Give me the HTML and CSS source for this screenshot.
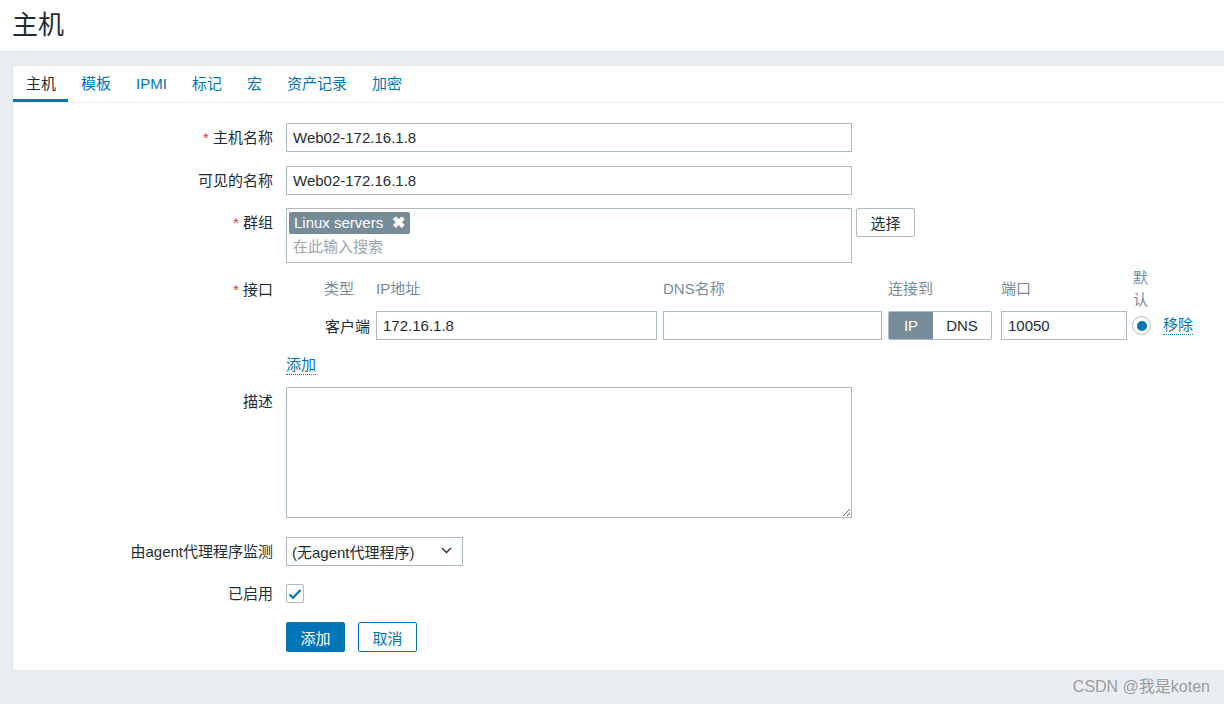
FILE: index.html
```html
<!DOCTYPE html>
<html lang="zh-CN">
<head>
<meta charset="utf-8">
<title>主机</title>
<link rel="stylesheet" href="styles.css">
</head>
<body>
<header class="page-header">
  <h1 class="page-title">主机</h1>
</header>
<main class="main">
  <section class="box">
    <ul class="tabs">
      <li class="tab active">主机</li>
      <li class="tab">模板</li>
      <li class="tab">IPMI</li>
      <li class="tab">标记</li>
      <li class="tab">宏</li>
      <li class="tab">资产记录</li>
      <li class="tab">加密</li>
    </ul>
    <form class="form">
      <div class="row r1">
        <label class="label"><span class="req">*</span> 主机名称</label>
        <input class="input wide" type="text" value="Web02-172.16.1.8">
      </div>
      <div class="row r2">
        <label class="label">可见的名称</label>
        <input class="input wide" type="text" value="Web02-172.16.1.8">
      </div>
      <div class="row r3">
        <label class="label"><span class="req">*</span> 群组</label>
        <div class="multiselect">
          <span class="tag">Linux servers <span class="tag-x">&#10006;</span></span>
          <span class="ms-placeholder">在此输入搜索</span>
        </div>
        <button type="button" class="btn-alt">选择</button>
      </div>
      <div class="row r4">
        <label class="label label-if"><span class="req">*</span> 接口</label>
        <div class="iface">
          <div class="ih"></div>
          <div class="ih">类型</div>
          <div class="ih">IP地址</div>
          <div class="ih">DNS名称</div>
          <div class="ih">连接到</div>
          <div class="ih">端口</div>
          <div class="ih ih-def">默认</div>
          <div class="ih"></div>

          <div></div>
          <div class="itype">客户端</div>
          <input class="input" type="text" value="172.16.1.8">
          <input class="input" type="text" value="">
          <div class="toggle"><span class="tg on">IP</span><span class="tg">DNS</span></div>
          <input class="input" type="text" value="10050">
          <div class="radio"><span class="dot"></span></div>
          <a class="link">移除</a>
        </div>
      </div>
      <div class="row r5">
        <span class="label"></span>
        <a class="link">添加</a>
      </div>
      <div class="row r6">
        <label class="label">描述</label>
        <textarea class="textarea"></textarea>
      </div>
      <div class="row r7">
        <label class="label">由agent代理程序监测</label>
        <div class="select">
          <span>(无agent代理程序)</span>
          <svg class="chev" width="11" height="7" viewBox="0 0 11 7"><path d="M1 1l4.5 4.5L10 1" fill="none" stroke="#1f2c33" stroke-width="1.3"/></svg>
        </div>
      </div>
      <div class="row r8">
        <label class="label lbl-cb">已启用</label>
        <span class="checkbox">
          <svg width="14" height="12" viewBox="0 0 14 12"><path d="M1.5 6.5l3.5 3.3L12.5 2" fill="none" stroke="#0275b8" stroke-width="2.2"/></svg>
        </span>
      </div>
      <div class="row r9">
        <span class="label"></span>
        <button type="button" class="btn-main">添加</button>
        <button type="button" class="btn-cancel">取消</button>
      </div>
    </form>
  </section>
</main>
<footer class="footer">CSDN @我是koten</footer>
</body>
</html>
```

FILE: styles.css
```css
* { box-sizing: border-box; }
html, body { margin: 0; padding: 0; }
body {
  background: #ebeef0;
  font-family: "Liberation Sans", Arial, "Noto Sans CJK SC", sans-serif;
  font-size: 15px;
  color: #1f2c33;
  width: 1224px;
  height: 704px;
  overflow: hidden;
}
.page-header {
  background: #fff;
  height: 52px;
  border-bottom: 1px solid #dfe4e7;
  padding-left: 12px;
}
.page-title {
  margin: 0;
  font-size: 26px;
  font-weight: normal;
  line-height: 50px;
  color: #1f2c33;
}
.main {
  padding: 13px 0 0 12px;
}
.box {
  background: #fff;
  border: 1px solid #dfe4e7;
  border-right: none;
  height: 606px;
}
.tabs {
  list-style: none;
  margin: 0;
  padding: 0;
  display: flex;
  height: 37px;
  border-bottom: 1px solid #ebeef0;
}
.tab {
  padding: 0 12px 0 13px;
  line-height: 36px;
  color: #0275b8;
  border-bottom: 3px solid transparent;
}
.tab.active {
  color: #1f2c33;
  border-bottom-color: #0275b8;
}
.form {
  padding-top: 20px;
}
.row {
  display: flex;
  align-items: flex-start;
}
.label {
  flex: 0 0 260px;
  width: 260px;
  margin-right: 13px;
  text-align: right;
  line-height: 29px;
  color: #1f2c33;
}
.req { color: #e33734; }
.input {
  height: 29px;
  border: 1px solid #acbbc2;
  padding: 0 6px;
  font: inherit;
  color: #1f2c33;
  background: #fff;
  outline: none;
  width: 100%;
}
.input.wide { width: 566px; }
.r1 { margin-bottom: 14px; }
.r2 { margin-bottom: 13px; }
.r3 { margin-bottom: 6px; }
.multiselect {
  width: 566px;
  height: 55px;
  border: 1px solid #acbbc2;
  padding: 3px 2px;
  display: flex;
  flex-direction: column;
  align-items: flex-start;
}
.tag {
  background: #768d99;
  color: #fff;
  border-radius: 2px;
  height: 22px;
  line-height: 22px;
  padding: 0 5px 0 5px;
  white-space: nowrap;
}
.tag-x { margin-left: 5px; font-size: 16px; font-weight: bold; }
.ms-placeholder {
  color: #9aa6ad;
  line-height: 26px;
  padding-left: 4px;
}
.btn-alt {
  margin-left: 4px;
  width: 59px;
  height: 29px;
  border: 1px solid #acbbc2;
  background: #fff;
  border-radius: 2px;
  font: inherit;
  color: #1f2c33;
  padding: 0;
}
.label-if { line-height: 42px; }
.iface {
  display: grid;
  grid-template-columns: 32px 46px 281px 219px 107px 126px 24px auto;
  grid-template-rows: 40px 29px;
  column-gap: 6px;
  row-gap: 2px;
  align-items: center;
}
.ih {
  color: #768d99;
  line-height: 22px;
}
.ih-def { word-break: break-all; }
.itype { white-space: nowrap; text-align: right; }
.toggle {
  display: flex;
  width: 104px;
  height: 29px;
  border: 1px solid #acbbc2;
  border-radius: 2px;
  overflow: hidden;
}
.tg {
  flex: 1;
  text-align: center;
  line-height: 27px;
}
.tg.on {
  flex: 0 0 44px;
  background: #768d99;
  color: #fff;
}
.radio {
  width: 19px;
  height: 19px;
  border: 1px solid #acbbc2;
  border-radius: 50%;
  display: flex;
  align-items: center;
  justify-content: center;
  margin-left: -1px;
}
.dot {
  width: 10px;
  height: 10px;
  border-radius: 50%;
  background: #0275b8;
}
.link {
  color: #0275b8;
  border-bottom: 1px dotted #0275b8;
  line-height: 18px;
  display: inline-block;
  cursor: pointer;
}
.r5 { margin-top: 16px; margin-bottom: 12px; }
.r6 { margin-bottom: 19px; }
.r6 .label { line-height: 29px; }
.textarea {
  width: 566px;
  height: 131px;
  border: 1px solid #acbbc2;
  font: inherit;
  margin: 0;
  padding: 6px;
  outline: none;
  display: block;
}
.r7 { margin-bottom: 18px; }
.select {
  width: 177px;
  height: 29px;
  border: 1px solid #acbbc2;
  display: flex;
  align-items: center;
  justify-content: space-between;
  padding: 0 10px 0 5px;
}
.chev { margin-top: -3px; }
.r8 { margin-bottom: 19px; }
.lbl-cb { line-height: 19px; }
.checkbox {
  width: 18px;
  height: 19px;
  border: 1px solid #acbbc2;
  border-radius: 2px;
  display: flex;
  align-items: center;
  justify-content: center;
}
.btn-main, .btn-cancel {
  height: 30px;
  width: 59px;
  font: inherit;
  border-radius: 2px;
  padding: 0;
}
.btn-main {
  background: #0275b8;
  border: 1px solid #0275b8;
  color: #fff;
}
.btn-cancel {
  margin-left: 13px;
  background: #fff;
  border: 1px solid #0275b8;
  color: #0275b8;
}
.footer {
  text-align: right;
  padding-right: 14px;
  line-height: 32px;
  color: #9a9da0;
  font-size: 16px;
}
```
